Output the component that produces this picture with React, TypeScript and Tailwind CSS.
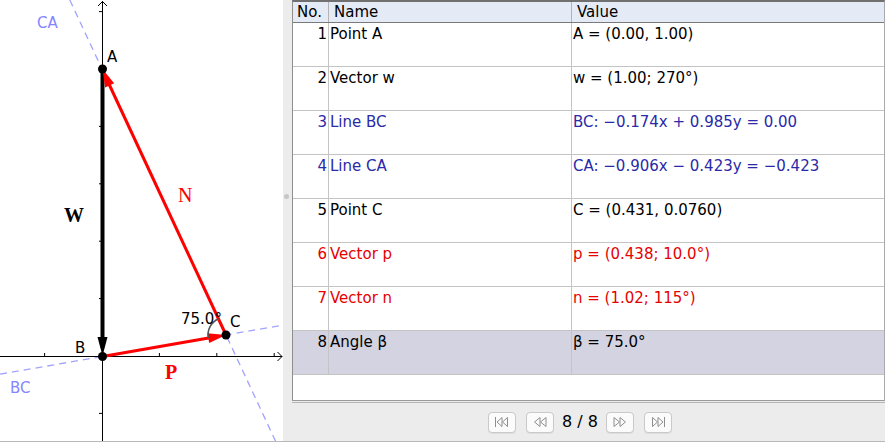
import React from 'react';

type Row = { no: number; name: string; value: string; color: string; selected?: boolean };

const rows: Row[] = [
  { no: 1, name: 'Point A', value: 'A = (0.00, 1.00)', color: 'text-black' },
  { no: 2, name: 'Vector w', value: 'w = (1.00; 270°)', color: 'text-black' },
  { no: 3, name: 'Line BC', value: 'BC: \u22120.174x + 0.985y = 0.00', color: 'text-[#2a2aa8]' },
  { no: 4, name: 'Line CA', value: 'CA: \u22120.906x \u2212 0.423y = \u22120.423', color: 'text-[#2a2aa8]' },
  { no: 5, name: 'Point C', value: 'C = (0.431, 0.0760)', color: 'text-black' },
  { no: 6, name: 'Vector p', value: 'p = (0.438; 10.0°)', color: 'text-[#e60000]' },
  { no: 7, name: 'Vector n', value: 'n = (1.02; 115°)', color: 'text-[#e60000]' },
  { no: 8, name: 'Angle β', value: 'β = 75.0°', color: 'text-black', selected: true },
];

const Canvas = () => {
  const yTicks = [11.6, 126.4, 183.8, 241.2, 298.6, 413.4];
  const xTicks = [44.6, 159.4, 216.8, 274.2];
  const sans = 'DejaVu Sans, sans-serif';
  const serif = 'Liberation Serif, serif';
  return (
    <svg width="283" height="441" viewBox="0 0 283 441">
      {/* dashed lines */}
      <line x1="69.8" y1="0" x2="276.4" y2="443" stroke="#a3a3ff" strokeWidth="1.3" strokeDasharray="7 5" />
      <line x1="0" y1="374.2" x2="283" y2="325.1" stroke="#a3a3ff" strokeWidth="1.3" strokeDasharray="7 5" />

      {/* axes */}
      <line x1="102.5" y1="1" x2="102.5" y2="441" stroke="#000" strokeWidth="1" />
      <polyline points="98,6 102.5,1.5 107,6" fill="none" stroke="#000" strokeWidth="1" />
      <line x1="0" y1="356.5" x2="282" y2="356.5" stroke="#000" strokeWidth="1" />
      <polyline points="277.5,352 282,356.5 277.5,361" fill="none" stroke="#000" strokeWidth="1" />
      {yTicks.map((y) => (
        <line key={y} x1="99" y1={y} x2="102.5" y2={y} stroke="#000" strokeWidth="1" />
      ))}
      {xTicks.map((x) => (
        <line key={x} x1={x} y1="353" x2={x} y2="356.5" stroke="#000" strokeWidth="1" />
      ))}

      {/* vector w */}
      <line x1="102.5" y1="69" x2="102.5" y2="340" stroke="#000" strokeWidth="4" />
      <polygon points="102.5,356 97.5,337 107.5,337" fill="#000" />

      {/* vector p */}
      <line x1="102.5" y1="356.5" x2="210" y2="337.8" stroke="#ff0000" strokeWidth="3" />
      <polygon points="226,335 209.2,343 207.4,333.2" fill="#ff0000" />

      {/* vector n */}
      <line x1="226" y1="335" x2="108.5" y2="83" stroke="#ff0000" strokeWidth="3" />
      <polygon points="102.5,69 114.1,83.2 105.1,87.4" fill="#ff0000" />

      {/* angle */}
      <path d="M 208.3 338.1 A 18 18 0 0 1 218.4 318.7" fill="none" stroke="#555" strokeWidth="1.6" />

      {/* points */}
      <circle cx="102.5" cy="69" r="4.5" fill="#000" />
      <circle cx="102.5" cy="356.5" r="4.5" fill="#000" />
      <circle cx="226" cy="335" r="4.5" fill="#000" />

      {/* labels */}
      <text x="37" y="28" fontFamily={sans} fontSize="15" fill="#8585ff">CA</text>
      <text x="107" y="62" fontFamily={sans} fontSize="15" fill="#000">A</text>
      <text x="64" y="222" fontFamily={serif} fontSize="20" fontWeight="bold" fill="#000">W</text>
      <text x="178" y="202" fontFamily={serif} fontSize="20" fill="#ff0000">N</text>
      <text x="75" y="353" fontFamily={sans} fontSize="15" fill="#000">B</text>
      <text x="165" y="379" fontFamily={serif} fontSize="20" fontWeight="bold" fill="#ff0000">P</text>
      <text x="10" y="393" fontFamily={sans} fontSize="15" fill="#8585ff">BC</text>
      <text x="230" y="327" fontFamily={sans} fontSize="15" fill="#000">C</text>
      <text x="181" y="324" fontFamily={sans} fontSize="15" fill="#000">75.0°</text>
    </svg>
  );
};

const NavIcon = ({ kind }: { kind: 'first' | 'prev' | 'next' | 'last' }) => {
  const c = '#8e8e8e';
  return (
    <svg width="16" height="12" viewBox="0 0 16 12">
      {kind === 'first' && (
        <g fill="none" stroke={c} strokeWidth="1">
          <line x1="1.5" y1="1" x2="1.5" y2="11" />
          <polygon points="8,1.5 3,6 8,10.5" />
          <polygon points="13.5,1.5 8.5,6 13.5,10.5" />
        </g>
      )}
      {kind === 'prev' && (
        <g fill="none" stroke={c} strokeWidth="1">
          <polygon points="8,1.5 2.5,6 8,10.5" />
          <polygon points="14,1.5 8.5,6 14,10.5" />
        </g>
      )}
      {kind === 'next' && (
        <g fill="none" stroke={c} strokeWidth="1">
          <polygon points="2,1.5 7.5,6 2,10.5" />
          <polygon points="8,1.5 13.5,6 8,10.5" />
        </g>
      )}
      {kind === 'last' && (
        <g fill="none" stroke={c} strokeWidth="1">
          <polygon points="2.5,1.5 7.5,6 2.5,10.5" />
          <polygon points="8,1.5 13,6 8,10.5" />
          <line x1="14.5" y1="1" x2="14.5" y2="11" />
        </g>
      )}
    </svg>
  );
};

const NavButton = ({ kind }: { kind: 'first' | 'prev' | 'next' | 'last' }) => (
  <button className="w-[28px] h-[21px] flex items-center justify-center rounded-[4px] border border-[#c9c9c9] bg-[#fbfbfb] shadow-[0_1px_0_rgba(0,0,0,0.06)]">
    <NavIcon kind={kind} />
  </button>
);

export default function App() {
  return (
    <div className="w-[885px] h-[443px] bg-white font-['DejaVu_Sans',sans-serif] overflow-hidden">
      <div className="flex h-[442px] border-b border-[#b8b8b8]">
        {/* Graphics view */}
        <div className="w-[283px] h-full bg-white">
          <Canvas />
        </div>

        {/* Algebra / construction protocol */}
        <div className="relative flex-1 flex flex-col bg-[#ececec] pl-[9px]">
          <div className="absolute left-[1px] top-[194px] w-[5px] h-[5px] rounded-full bg-[#c6c6c6]" />

          <div className="h-[401px] flex flex-col bg-white border-l border-r border-b border-t-2 border-l-[#8f8f8f] border-r-[#a9a9a9] border-b-[#9a9a9a] border-t-[#707070] text-[15px] leading-[18px]">
            {/* header */}
            <div className="flex h-[21px] bg-[#e4ebf7] border-b border-[#7a7a7a]">
              <div className="w-[36px] border-r border-[#b3b3b3] pl-[4px] pt-[1px]">No.</div>
              <div className="w-[243px] border-r border-[#b3b3b3] pl-[5px] pt-[1px]">Name</div>
              <div className="flex-1 pl-[5px] pt-[1px]">Value</div>
            </div>
            {rows.map((r) => (
              <div
                key={r.no}
                className={`flex h-[44px] border-b border-[#c4c4c4] ${r.color} ${r.selected ? 'bg-[#d3d3e1]' : ''}`}
              >
                <div className="w-[36px] border-r border-[#c4c4c4] text-right pr-[1px] pt-[2px]">{r.no}</div>
                <div className="w-[243px] border-r border-[#c4c4c4] pl-[1px] pt-[2px]">{r.name}</div>
                <div className="flex-1 pl-[1px] pt-[2px]">{r.value}</div>
              </div>
            ))}
          </div>

          <div className="mt-[1px] flex-1 border-t border-[#b5b5b5] flex items-center pl-[196px] text-[16px] text-black">
            <NavButton kind="first" />
            <div className="w-[10px]" />
            <NavButton kind="prev" />
            <span className="mx-[8px]">8 / 8</span>
            <NavButton kind="next" />
            <div className="w-[10px]" />
            <NavButton kind="last" />
          </div>
        </div>
      </div>
    </div>
  );
}
